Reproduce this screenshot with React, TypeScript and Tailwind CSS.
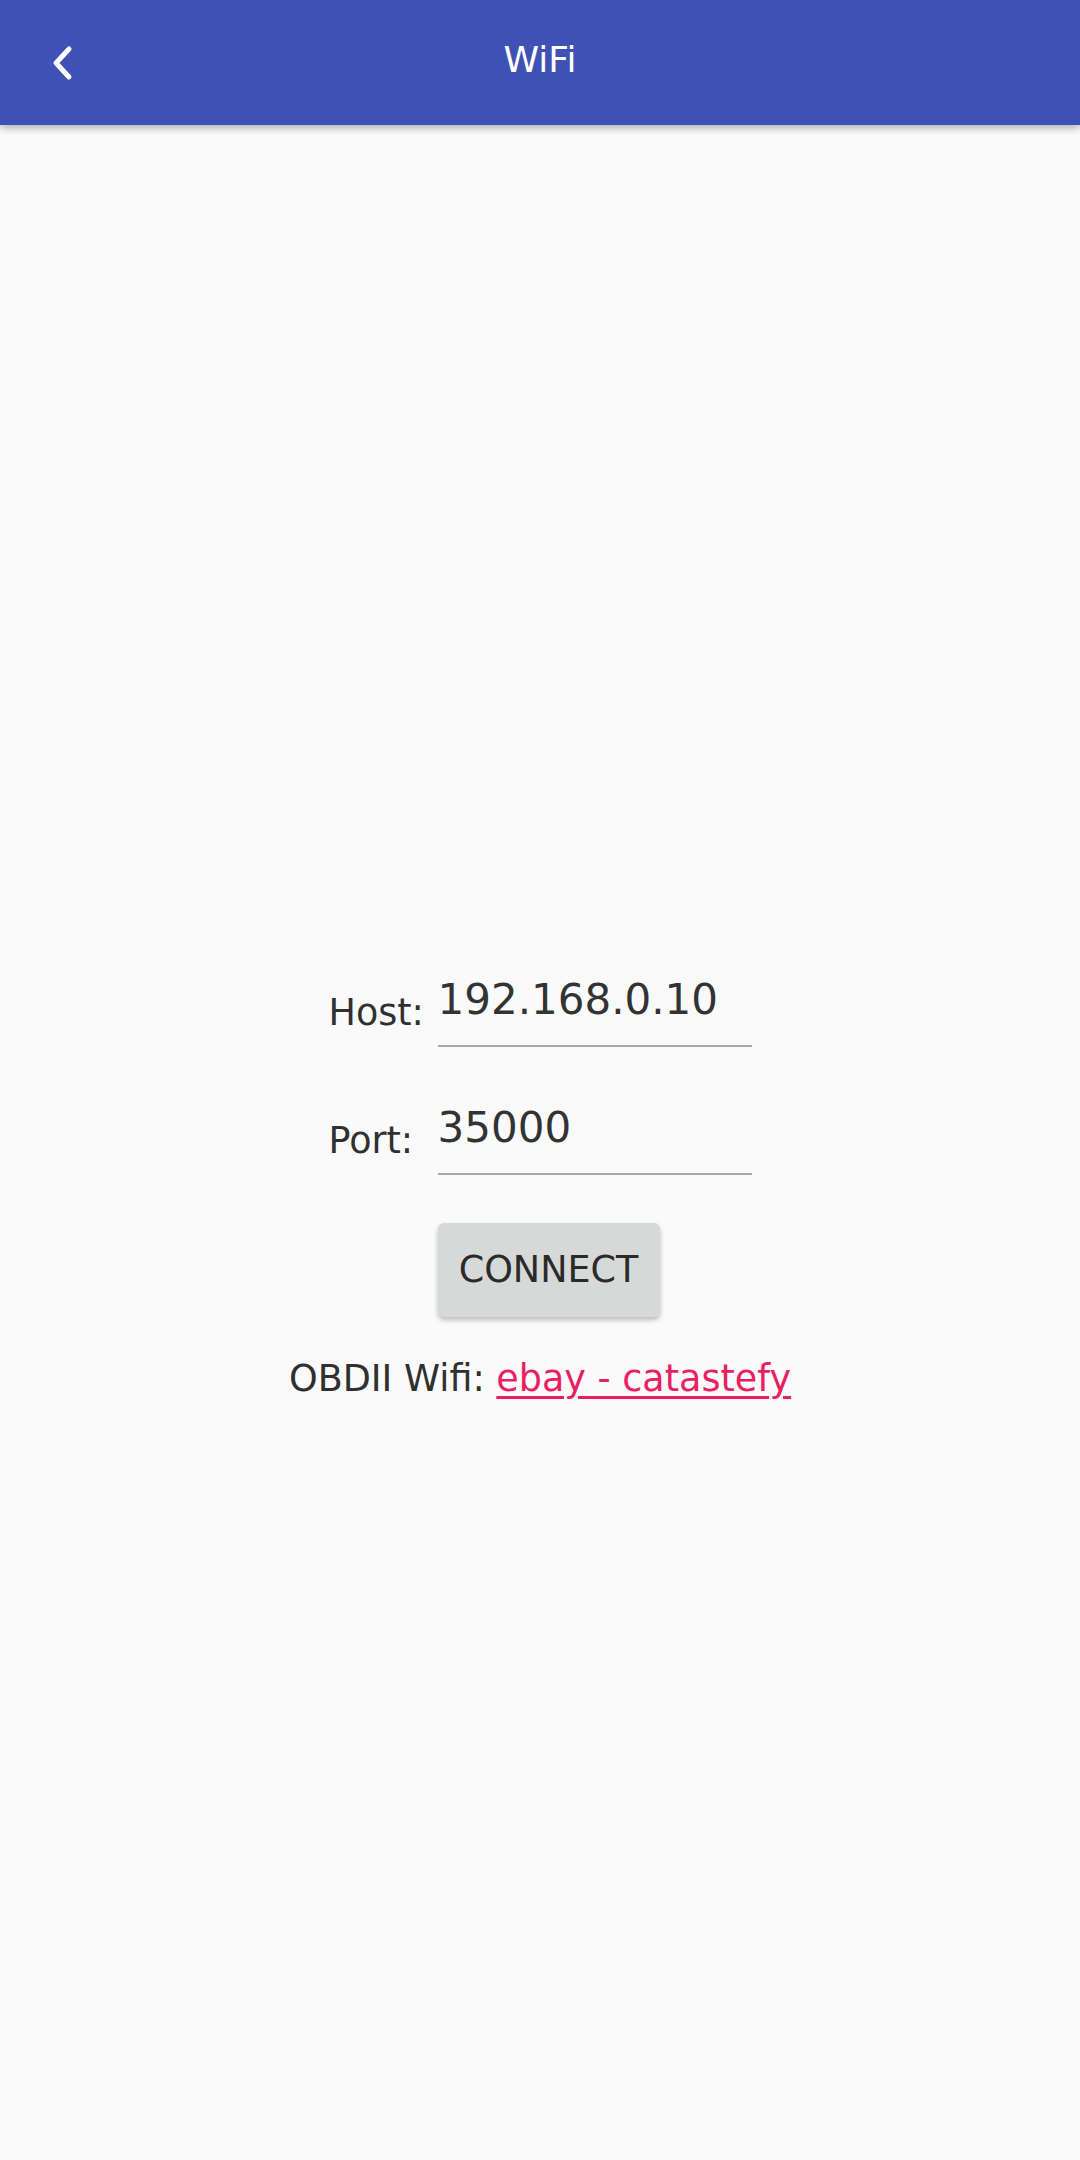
export default function App() {
  return (
    <div
      className="flex min-h-[2160px] w-[1080px] flex-col bg-[#fafafa] text-[#303030]"
      style={{ fontFamily: '"DejaVu Sans", sans-serif' }}
    >
      <header className="relative z-10 flex h-[125px] items-center bg-[#3f51b5] shadow-[0_3px_8px_rgba(0,0,0,0.3)]">
        <button className="flex h-[125px] w-[124px] items-center justify-center text-white" aria-label="Back">
          <svg width="24" height="36" viewBox="0 0 24 36" fill="none">
            <path
              d="M19 4L6 18L19 32"
              stroke="currentColor"
              strokeWidth="5"
              strokeLinecap="round"
              strokeLinejoin="round"
            />
          </svg>
        </button>
        <h1 className="absolute left-1/2 top-[39px] -translate-x-1/2 text-[36px] leading-[42px] text-white">WiFi</h1>
      </header>

      <main className="flex flex-col items-center pt-[849px]">
        <div className="grid grid-cols-[109px_314px] gap-y-[55px]">
          <label className="self-end pb-[13px] text-[36.5px] leading-[42px]">Host:</label>
          <div className="border-b-2 border-[#a8a8a8] pb-[20px] text-[42px] leading-[51px] text-[#333]">192.168.0.10</div>
          <label className="self-end pb-[13px] text-[36.5px] leading-[42px]">Port:</label>
          <div className="border-b-2 border-[#a8a8a8] pb-[20px] text-[42px] leading-[51px] text-[#333]">35000</div>
        </div>

        <div className="mt-[48px] grid grid-cols-[109px_314px]">
          <div />
          <button className="h-[94px] w-[222px] rounded-[6px] bg-[#d7d8d8] text-[36.5px] text-[#2a2a2a] shadow-[0_3px_5px_rgba(0,0,0,0.25)]">
            CONNECT
          </button>
        </div>

        <p className="mt-[40px] text-[36.5px] leading-[44px]">
          OBDII Wifi:{" "}
          <a href="#" className="text-[#e91e63] underline underline-offset-[5px]">
            ebay - catastefy
          </a>
        </p>
      </main>
    </div>
  );
}
